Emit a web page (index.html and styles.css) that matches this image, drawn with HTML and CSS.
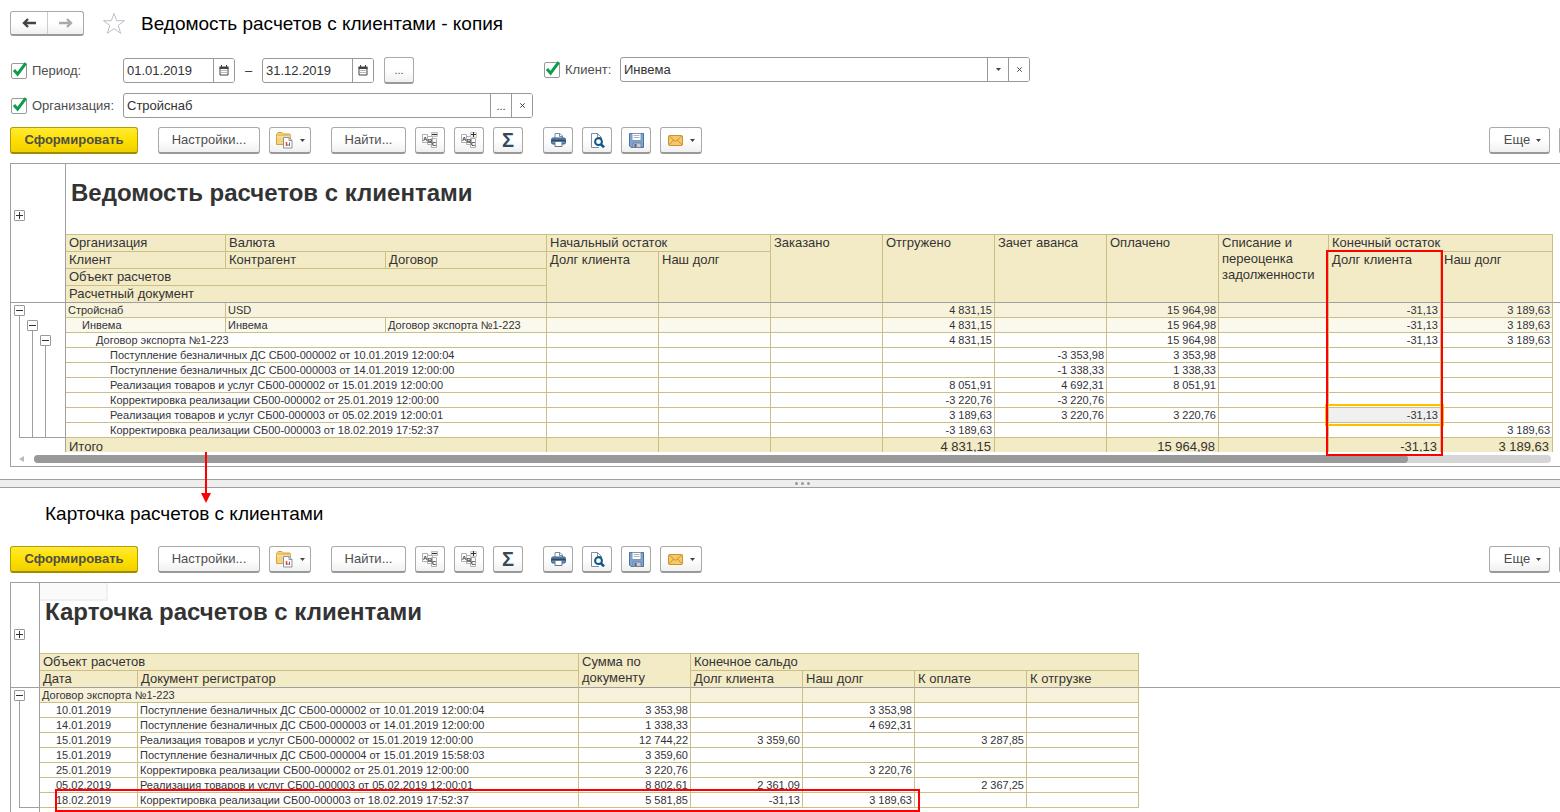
FILE: index.html
```html
<!DOCTYPE html>
<html lang="ru">
<head>
<meta charset="utf-8">
<title>Ведомость расчетов с клиентами</title>
<link rel="stylesheet" href="styles.css">
</head>
<body>
<svg class="defs" aria-hidden="true">
  <symbol id="i-check" viewBox="0 0 18 18"><path d="M4 8 L7.6 12.200 L15.800 1.200" fill="none" stroke="#0a9d4a" stroke-width="3"/></symbol>
  <symbol id="i-cal" viewBox="0 0 10 11"><path d="M1 2.5h8v7.5H1z" fill="#fff" stroke="#444"/><path d="M.5 1.5h9v2.500h-9z" fill="#444"/><path d="M2.5 0v2M7.5 0v2" stroke="#444"/><path d="M2.500 5.500h5M2.500 7.500h5" stroke="#777" stroke-dasharray="1 1"/></symbol>
  <symbol id="i-down" viewBox="0 0 5 3"><path d="M0 0h5L2.5 3z" fill="#444"/></symbol>
  <symbol id="i-x" viewBox="0 0 5 5"><path d="M.3.3l4.4 4.4M4.7.3L.3 4.7" stroke="#444" stroke-width="1"/></symbol>
  <symbol id="i-folder" viewBox="0 0 17 17"><path d="M.5 4.5V2.500L2 .5h4l1.500 1.500H14l.5 2.500v8H.5z" fill="#f4d37c" stroke="#d9a143"/><path d="M1 5h13" stroke="#fbe9b5"/><path d="M2 3h11" stroke="#d9a143" opacity=".7"/><path d="M7.500 5.500h5.500l3 3v7.500H7.500z" fill="#fff" stroke="#8096a8"/><path d="M13 5.500v3h3" fill="none" stroke="#8096a8"/><path d="M10.500 10v4" stroke="#e0413a" stroke-width="1.500"/><path d="M12 12v2" stroke="#3bab52"/><path d="M13.500 10.500v3.500" stroke="#e0413a"/></symbol>
  <symbol id="i-abc" viewBox="0 0 16 16"><g fill="#fff" stroke="#b0b0b0"><path d="M.5 2.500h5v8h-5zM5.500 4.500h5v8h-5zM9.500 6.500h5v9h-5z"/></g><g font-family="Liberation Sans" font-weight="bold" font-size="6" fill="#333"><text x="1" y="9">A</text><text x="5.700" y="11">B</text><text x="10" y="14">C</text></g></symbol>
  <symbol id="i-minus" viewBox="0 0 16 16"><use href="#i-abc"/><path d="M9.500.5h6v4h-6z" fill="#e8e8e8" stroke="#bbb"/><path d="M10 2.500h5" stroke="#333"/></symbol>
  <symbol id="i-plus" viewBox="0 0 16 16"><use href="#i-abc"/><path d="M9.500.5h6v5h-6z" fill="#eee" stroke="#ccc"/><path d="M10 2.500h5M12.500 0v5" stroke="#333"/></symbol>
  <symbol id="i-print" viewBox="0 0 15 14"><path d="M4 6V.5h5L11.500 3v3" fill="#fff" stroke="#7b8fa3"/><path d="M8.500.5V3.500h3" fill="none" stroke="#7b8fa3"/><rect x=".5" y="5" width="14" height="6" rx="1.500" fill="#6b93bd" stroke="#335b82"/><path d="M1 7.500h13" stroke="#27496b" stroke-width="2"/><path d="M4 8.500h7v5H4z" fill="#fff" stroke="#5f7891"/></symbol>
  <symbol id="i-preview" viewBox="0 0 15 15"><path d="M9 14.500H1.500V.5h6l4 4v2" fill="#fff" stroke="#7b8fa3"/><path d="M7.500.5v4h4" fill="none" stroke="#7b8fa3"/><circle cx="8.500" cy="8.700" r="3.400" fill="#fff" stroke="#0b5687" stroke-width="2"/><path d="M11 11.300l3 3" stroke="#0b5687" stroke-width="2.600"/></symbol>
  <symbol id="i-save" viewBox="0 0 15 15"><path d="M.5.500h14v14H2L.5 13z" fill="#7aa5d8" stroke="#4f7196"/><path d="M3 .5h9v7H3z" fill="#fff" stroke="#7f97b3"/><path d="M4.500 2.500h6M4.500 4.500h6" stroke="#aab5c2"/><path d="M4 10h8v4.500H4z" fill="#c9cdd1" stroke="#6f8296"/><path d="M5.500 11h2v3h-2z" fill="#46617e"/></symbol>
  <symbol id="i-mail" viewBox="0 0 15 11"><rect x=".5" y=".5" width="14" height="10" rx="1" fill="#f5c869" stroke="#cf9030"/><path d="M1 1l6.500 5.500L14 1M1 10l4.500-5M14 10L9.500 5" fill="none" stroke="#cf9030"/></symbol>
</svg>

<main class="page">
  <header class="head">
    <div class="nav">
      <button type="button" aria-label="Назад"><svg width="14" height="10" viewBox="0 0 14 10"><path d="M14 5H3M6 1L2 5l4 4" fill="none" stroke="#444" stroke-width="2.400"/></svg></button>
      <button type="button" aria-label="Вперед"><svg width="14" height="10" viewBox="0 0 14 10"><path d="M0 5h11M8 1l4 4-4 4" fill="none" stroke="#aaa" stroke-width="2.400"/></svg></button>
    </div>
    <button type="button" class="star" aria-label="Избранное"><svg width="24" height="23" viewBox="0 0 24 23"><path d="M12 1.500l2.700 7.200h7.800l-6.300 4.700 2.400 7.900L12 16.600l-6.600 4.700 2.400-7.900L1.500 8.700h7.800z" fill="#fff" stroke="#b9c0c7"/></svg></button>
    <h1>Ведомость расчетов с клиентами - копия</h1>
  </header>

  <form class="filters">
    <div class="filter-col">
      <div class="filter">
        <label class="check"><span class="box"><input type="checkbox" checked><svg><use href="#i-check"/></svg></span>Период:</label>
        <div class="dates">
          <div class="field date"><input type="text" value="01.01.2019" aria-label="Начало периода"><button type="button" aria-label="Календарь"><svg width="10" height="11"><use href="#i-cal"/></svg></button></div>
          <span>–</span>
          <div class="field date"><input type="text" value="31.12.2019" aria-label="Конец периода"><button type="button" aria-label="Календарь"><svg width="10" height="11"><use href="#i-cal"/></svg></button></div>
          <button type="button" class="btn icon dots">...</button>
        </div>
      </div>
      <div class="filter">
        <label class="check"><span class="box"><input type="checkbox" checked><svg><use href="#i-check"/></svg></span>Организация:</label>
        <div class="field wide"><input type="text" value="Стройснаб" aria-label="Организация"><button type="button">...</button><button type="button" aria-label="Очистить"><svg width="5" height="5"><use href="#i-x"/></svg></button></div>
      </div>
    </div>
    <div class="filter client">
      <label class="check"><span class="box"><input type="checkbox" checked><svg><use href="#i-check"/></svg></span>Клиент:</label>
      <div class="field wide"><input type="text" value="Инвема" aria-label="Клиент"><button type="button" aria-label="Выбрать"><svg width="5" height="3"><use href="#i-down"/></svg></button><button type="button" aria-label="Очистить"><svg width="5" height="5"><use href="#i-x"/></svg></button></div>
    </div>
  </form>

  <div class="toolbar">
    <div class="group"><button type="button" class="btn primary">Сформировать</button></div>
    <div class="group"><button type="button" class="btn settings">Настройки...</button><button type="button" class="btn drop" aria-label="Варианты"><svg width="17" height="17"><use href="#i-folder"/></svg><svg width="5" height="3"><use href="#i-down"/></svg></button></div>
    <div class="group"><button type="button" class="btn find">Найти...</button><button type="button" class="btn icon" aria-label="Свернуть"><svg width="16" height="16"><use href="#i-minus"/></svg></button><button type="button" class="btn icon" aria-label="Развернуть"><svg width="16" height="16"><use href="#i-plus"/></svg></button><button type="button" class="btn icon sum">Σ</button></div>
    <div class="group"><button type="button" class="btn icon" aria-label="Печать"><svg width="15" height="14"><use href="#i-print"/></svg></button><button type="button" class="btn icon" aria-label="Просмотр"><svg width="15" height="15"><use href="#i-preview"/></svg></button><button type="button" class="btn icon" aria-label="Сохранить"><svg width="15" height="15"><use href="#i-save"/></svg></button><button type="button" class="btn drop" aria-label="Отправить"><svg width="15" height="11"><use href="#i-mail"/></svg><svg width="5" height="3"><use href="#i-down"/></svg></button></div>
    <div class="group end"><button type="button" class="btn more">Еще<svg width="5" height="3"><use href="#i-down"/></svg></button><button type="button" class="btn icon" aria-label="Справка"></button></div>
  </div>

  <section class="panel statement">
    <div class="view">
      <div class="outline">
        <div class="outline-head"><button type="button" class="knob plus" aria-label="Развернуть"></button></div>
        <div class="tree">
          <div class="branches">
            <div class="branch"><button type="button" class="knob" aria-label="Свернуть"></button></div>
            <div class="branch second"><button type="button" class="knob" aria-label="Свернуть"></button></div>
            <div class="branch third"><button type="button" class="knob" aria-label="Свернуть"></button></div>
          </div>
          <div class="foot"></div>
        </div>
      </div>
      <div class="sheet">
        <h2>Ведомость расчетов с клиентами</h2>
        <table>
          <colgroup><col class="c160"><col class="c160"><col class="c161"><col class="c112"><col class="c112"><col class="c112"><col class="c112"><col class="c112"><col class="c112"><col class="c110"><col class="c112"><col class="c112"><col></colgroup>
          <thead>
            <tr><th>Организация</th><th colspan="2">Валюта</th><th colspan="2">Начальный остаток</th><th rowspan="4" class="b">Заказано</th><th rowspan="4" class="b">Отгружено</th><th rowspan="4" class="b">Зачет аванса</th><th rowspan="4" class="b">Оплачено</th><th rowspan="4" class="b">Списание и переоценка задолженности</th><th colspan="2">Конечный остаток</th><td rowspan="4" class="fill b"></td></tr>
            <tr><th>Клиент</th><th>Контрагент</th><th>Договор</th><th rowspan="3" class="b">Долг клиента</th><th rowspan="3" class="b">Наш долг</th><th rowspan="3" class="b">Долг клиента</th><th rowspan="3" class="b">Наш долг</th></tr>
            <tr><th colspan="3">Объект расчетов</th></tr>
            <tr><th colspan="3" class="b">Расчетный документ</th></tr>
          </thead>
          <tbody>
            <tr class="g1"><td>Стройснаб</td><td colspan="2">USD</td><td></td><td></td><td></td><td class="n">4 831,15</td><td></td><td class="n">15 964,98</td><td></td><td class="n">-31,13</td><td class="n">3 189,63</td></tr>
            <tr class="g2"><td class="l1">Инвема</td><td>Инвема</td><td>Договор экспорта №1-223</td><td></td><td></td><td></td><td class="n">4 831,15</td><td></td><td class="n">15 964,98</td><td></td><td class="n">-31,13</td><td class="n">3 189,63</td></tr>
            <tr><td colspan="3" class="l2">Договор экспорта №1-223</td><td></td><td></td><td></td><td class="n">4 831,15</td><td></td><td class="n">15 964,98</td><td></td><td class="n">-31,13</td><td class="n">3 189,63</td></tr>
            <tr><td colspan="3" class="l3">Поступление безналичных ДС СБ00-000002 от 10.01.2019 12:00:04</td><td></td><td></td><td></td><td></td><td class="n">-3 353,98</td><td class="n">3 353,98</td><td></td><td></td><td></td></tr>
            <tr><td colspan="3" class="l3">Поступление безналичных ДС СБ00-000003 от 14.01.2019 12:00:00</td><td></td><td></td><td></td><td></td><td class="n">-1 338,33</td><td class="n">1 338,33</td><td></td><td></td><td></td></tr>
            <tr><td colspan="3" class="l3">Реализация товаров и услуг СБ00-000002 от 15.01.2019 12:00:00</td><td></td><td></td><td></td><td class="n">8 051,91</td><td class="n">4 692,31</td><td class="n">8 051,91</td><td></td><td></td><td></td></tr>
            <tr><td colspan="3" class="l3">Корректировка реализации СБ00-000002 от 25.01.2019 12:00:00</td><td></td><td></td><td></td><td class="n">-3 220,76</td><td class="n">-3 220,76</td><td></td><td></td><td></td><td></td></tr>
            <tr><td colspan="3" class="l3">Реализация товаров и услуг СБ00-000003 от 05.02.2019 12:00:01</td><td></td><td></td><td></td><td class="n">3 189,63</td><td class="n">3 220,76</td><td class="n">3 220,76</td><td></td><td class="n selected">-31,13</td><td></td></tr>
            <tr><td colspan="3" class="l3">Корректировка реализации СБ00-000003 от 18.02.2019 17:52:37</td><td></td><td></td><td></td><td class="n">-3 189,63</td><td></td><td></td><td></td><td></td><td class="n">3 189,63</td></tr>
          </tbody>
          <tfoot>
            <tr><td colspan="3">Итого</td><td></td><td></td><td></td><td class="n">4 831,15</td><td></td><td class="n">15 964,98</td><td></td><td class="n">-31,13</td><td class="n">3 189,63</td></tr>
          </tfoot>
        </table>
      </div>
    </div>
    <div class="scroll"><svg width="5" height="6" viewBox="0 0 5 6"><path d="M5 0v6L0 3z" fill="#bbb"/></svg><div class="track"><div class="thumb"></div></div></div>
    <div class="mark mark-debt"></div>
    <svg class="arrow" width="10" height="51" viewBox="0 0 10 51"><path d="M5 0v42" stroke="#f00" stroke-width="2"/><path d="M0 41h10L5 51z" fill="#f00"/></svg>
  </section>

  <div class="splitter"><i></i><i></i><i></i></div>

  <h1 class="card-title">Карточка расчетов с клиентами</h1>

  <div class="toolbar">
    <div class="group"><button type="button" class="btn primary">Сформировать</button></div>
    <div class="group"><button type="button" class="btn settings">Настройки...</button><button type="button" class="btn drop" aria-label="Варианты"><svg width="17" height="17"><use href="#i-folder"/></svg><svg width="5" height="3"><use href="#i-down"/></svg></button></div>
    <div class="group"><button type="button" class="btn find">Найти...</button><button type="button" class="btn icon" aria-label="Свернуть"><svg width="16" height="16"><use href="#i-minus"/></svg></button><button type="button" class="btn icon" aria-label="Развернуть"><svg width="16" height="16"><use href="#i-plus"/></svg></button><button type="button" class="btn icon sum">Σ</button></div>
    <div class="group"><button type="button" class="btn icon" aria-label="Печать"><svg width="15" height="14"><use href="#i-print"/></svg></button><button type="button" class="btn icon" aria-label="Просмотр"><svg width="15" height="15"><use href="#i-preview"/></svg></button><button type="button" class="btn icon" aria-label="Сохранить"><svg width="15" height="15"><use href="#i-save"/></svg></button><button type="button" class="btn drop" aria-label="Отправить"><svg width="15" height="11"><use href="#i-mail"/></svg><svg width="5" height="3"><use href="#i-down"/></svg></button></div>
    <div class="group end"><button type="button" class="btn more">Еще<svg width="5" height="3"><use href="#i-down"/></svg></button><button type="button" class="btn icon" aria-label="Справка"></button></div>
  </div>

  <section class="panel card">
    <div class="view">
      <div class="outline">
        <div class="outline-head"><button type="button" class="knob plus" aria-label="Развернуть"></button></div>
        <div class="tree">
          <div class="branches"><div class="branch"><button type="button" class="knob" aria-label="Свернуть"></button></div></div>
          <div class="foot"></div>
        </div>
      </div>
      <div class="sheet">
        <h2>Карточка расчетов с клиентами</h2>
        <table>
          <colgroup><col class="c98"><col class="c441"><col class="c112"><col class="c112"><col class="c112"><col class="c112"><col class="c112"><col></colgroup>
          <thead>
            <tr><th colspan="2">Объект расчетов</th><th rowspan="2" class="b">Сумма по документу</th><th colspan="4">Конечное сальдо</th><td rowspan="2" class="fill b"></td></tr>
            <tr><th class="b">Дата</th><th class="b">Документ регистратор</th><th class="b">Долг клиента</th><th class="b">Наш долг</th><th class="b">К оплате</th><th class="b">К отгрузке</th></tr>
          </thead>
          <tbody>
            <tr class="g1"><td colspan="2">Договор экспорта №1-223</td><td></td><td></td><td></td><td></td><td></td></tr>
            <tr><td class="l1">10.01.2019</td><td>Поступление безналичных ДС СБ00-000002 от 10.01.2019 12:00:04</td><td class="n">3 353,98</td><td></td><td class="n">3 353,98</td><td></td><td></td></tr>
            <tr><td class="l1">14.01.2019</td><td>Поступление безналичных ДС СБ00-000003 от 14.01.2019 12:00:00</td><td class="n">1 338,33</td><td></td><td class="n">4 692,31</td><td></td><td></td></tr>
            <tr><td class="l1">15.01.2019</td><td>Реализация товаров и услуг СБ00-000002 от 15.01.2019 12:00:00</td><td class="n">12 744,22</td><td class="n">3 359,60</td><td></td><td class="n">3 287,85</td><td></td></tr>
            <tr><td class="l1">15.01.2019</td><td>Поступление безналичных ДС СБ00-000004 от 15.01.2019 15:58:03</td><td class="n">3 359,60</td><td></td><td></td><td></td><td></td></tr>
            <tr><td class="l1">25.01.2019</td><td>Корректировка реализации СБ00-000002 от 25.01.2019 12:00:00</td><td class="n">3 220,76</td><td></td><td class="n">3 220,76</td><td></td><td></td></tr>
            <tr><td class="l1">05.02.2019</td><td>Реализация товаров и услуг СБ00-000003 от 05.02.2019 12:00:01</td><td class="n">8 802,61</td><td class="n">2 361,09</td><td></td><td class="n">2 367,25</td><td></td></tr>
            <tr><td class="l1">18.02.2019</td><td>Корректировка реализации СБ00-000003 от 18.02.2019 17:52:37</td><td class="n">5 581,85</td><td class="n">-31,13</td><td class="n">3 189,63</td><td></td><td></td></tr>
          </tbody>
        </table>
      </div>
    </div>
    <div class="mark mark-row"></div>
  </section>
</main>
</body>
</html>
```

FILE: styles.css
```css
* { box-sizing: border-box; }

body {
  margin: 0;
  background: #fff;
  color: #333;
  font-family: "Liberation Sans", Arial, sans-serif;
  font-size: 13px;
  line-height: 16px;
  overflow: hidden;
}

button, input { font: inherit; color: inherit; margin: 0; padding: 0; }
h1, h2 { margin: 0; }
svg { display: block; flex: none; }
.defs { display: none; }

.page { display: flex; flex-direction: column; height: 100vh; overflow: hidden; }

/* Window heading */
.head { display: flex; align-items: center; height: 25px; margin: 11px 10px 21px; flex: none; }
.nav { display: flex; height: 25px; border: 1px solid #aaa; border-bottom: 2px solid #999; border-radius: 3px; background: linear-gradient(#fff 50%, #f0f0f0); }
.nav button { width: 36px; border: 0; background: none; display: grid; place-items: center; }
.nav button + button { border-left: 1px solid #ccc; }
.star { border: 0; background: none; margin: 0 15px 0 18px; }
h1 { font-size: 19px; line-height: 22px; font-weight: normal; color: #000; }

/* Filters */
.filters { display: flex; align-items: flex-start; gap: 10px; padding-left: 10px; margin-bottom: 9px; flex: none; }
.filter-col { display: flex; flex-direction: column; gap: 9px; }
.filter { display: flex; align-items: center; }
.check { display: flex; align-items: center; gap: 4px; width: 113px; color: #4d4d4d; }
.client .check { width: 77px; }
.box { display: grid; width: 18px; height: 18px; place-items: center; }
.box > * { grid-area: 1 / 1; }
.box input { appearance: none; width: 16px; height: 16px; border: 1px solid #999; border-radius: 2px; background: #fff; }
.box svg { width: 18px; height: 18px; pointer-events: none; z-index: 1; }
.dates { display: flex; align-items: center; }
.dates > span { width: 27px; text-align: center; }
.field { display: flex; height: 25px; border: 1px solid #999; border-radius: 3px; background: #fff; overflow: hidden; }
.field.date { width: 112px; }
.field.wide { width: 410px; }
.field input { flex: 1; min-width: 0; border: 0; padding-left: 3px; background: none; outline: 0; }
.field button { width: 21px; border: 0; border-left: 1px solid #999; background: #fff; display: grid; place-items: center; font-size: 11px; }
.dots { margin-left: 10px; font-size: 11px; }

/* Command bar */
.toolbar { display: flex; gap: 20px; margin: 0 -29px 9px 10px; flex: none; }
.group { display: flex; gap: 9px; }
.group.end { margin-left: auto; }
.btn {
  height: 27px;
  border: 1px solid #aaa;
  border-bottom: 2px solid #999;
  border-radius: 3px;
  background: linear-gradient(#fff 50%, #f0f0f0);
  color: #4d4d4d;
  display: flex;
  align-items: center;
  justify-content: center;
}
.primary { width: 128px; font-weight: bold; border-color: #b39b00; border-bottom-color: #a08a00; background: linear-gradient(#ffea36, #fee000 50%, #f0d000); }
.settings { width: 102px; }
.find { width: 75px; }
.icon { width: 30px; }
.drop { width: 42px; gap: 7px; }
.more { width: 61px; gap: 6px; padding-left: 6px; }
.sum { font-size: 20px; font-weight: bold; color: #34495a; }

/* Spreadsheet panels */
.panel { position: relative; border: 1px solid #a0a0a0; border-right: 0; margin-left: 10px; flex: none; }
.view { display: flex; overflow: hidden; }
.statement .view { height: 288px; }
.outline { width: 55px; border-right: 1px solid #a0a0a0; flex: none; }
.outline-head { height: 139px; padding: 46px 0 0 3px; border-bottom: 1px solid #a0a0a0; }
.tree { height: 135px; display: flex; flex-direction: column; }
.branches { display: flex; gap: 2px; flex: 1; padding-left: 3px; }
.branch { display: flex; flex-direction: column; align-items: center; width: 11px; padding-top: 2px; }
.branch::after { content: ""; width: 1px; flex: 1; background: #a0a0a0; }
.branch.second { padding-top: 17px; }
.branch.third { padding-top: 32px; }
.foot { height: 1px; margin-left: 8px; background: #a0a0a0; }
.knob {
  display: block;
  width: 11px;
  height: 11px;
  border: 1px solid #999;
  border-radius: 1px;
  background: linear-gradient(#333, #333) center / 7px 1px no-repeat #fff;
}
.knob.plus { background: linear-gradient(#333, #333) center / 7px 1px no-repeat, linear-gradient(#333, #333) center / 1px 7px no-repeat, #fff; }

.sheet { flex: 1; min-width: 0; position: relative; }
h2 { height: 70px; padding-left: 5px; font-size: 24px; line-height: 58px; white-space: nowrap; }
table { width: 100%; table-layout: fixed; border-collapse: separate; border-spacing: 0; }
.c98 { width: 98px; }
.c110 { width: 110px; }
.c112 { width: 112px; }
.c160 { width: 160px; }
.c161 { width: 161px; }
.c441 { width: 441px; }
th, td { padding: 0 2px; border: solid #ccbf85; border-width: 0 1px 1px 0; vertical-align: top; text-align: left; }
th { padding-left: 3px; height: 17px; font-weight: normal; background: #f3ebc5; }
thead tr:first-child th { border-top-width: 1px; }
.b { border-bottom-color: #a0a0a0; }
.fill { border-right: 0; }
tbody td { height: 15px; font-size: 11px; line-height: 14px; white-space: nowrap; }
tfoot td { height: 18px; padding: 1px 3px 0; background: #f3ebc5; }
.n { text-align: right; }
.g1 td { background: #f7f2dc; }
.g2 td { background: #fbf9ee; }
.l1 { padding-left: 16px; }
.l2 { padding-left: 30px; }
.l3 { padding-left: 44px; }
.selected { position: relative; background: #f0f0f0; }
.selected::after { content: ""; position: absolute; inset: -4px; border: 2px solid #fdbf00; }

.scroll { display: flex; align-items: center; gap: 10px; height: 14px; padding: 0 9px 0 8px; }
.track { flex: 1; height: 8px; border-radius: 4px; background: #d6d6d6; }
.thumb { height: 8px; border-radius: 4px; background: #999; margin-right: 143px; }

/* Red annotations over the sheets */
.mark { position: absolute; border: 2px solid #f00; }
.mark-debt { left: 1315px; top: 86px; width: 117px; height: 206px; }
.mark-row { left: 44px; top: 206px; width: 865px; height: 23px; }
.arrow { position: absolute; left: 190px; top: 288px; z-index: 2; }

.splitter { display: flex; justify-content: center; align-items: center; gap: 3px; height: 9px; margin: 12px 0 15px; padding-left: 45px; background: #eee; border: solid #a0a0a0; border-width: 1px 0; flex: none; }
.splitter i { width: 3px; height: 3px; border-radius: 50%; background: #999; }
.card-title { padding-left: 45px; margin-bottom: 21px; flex: none; }

.card { flex: 1; min-height: 0; border-bottom: 0; overflow: hidden; }
.card .view { height: 100%; }
.card .outline { width: 29px; }
.card .outline-head { height: 105px; }
.card .tree { height: 120px; }
.card h2 { position: relative; }
.card h2::before { content: ""; position: absolute; left: 0; top: 0; width: 66px; height: 16px; background: #fafafa; border: solid #f0f0f0; border-width: 0 2px 2px 0; z-index: -1; }
```
